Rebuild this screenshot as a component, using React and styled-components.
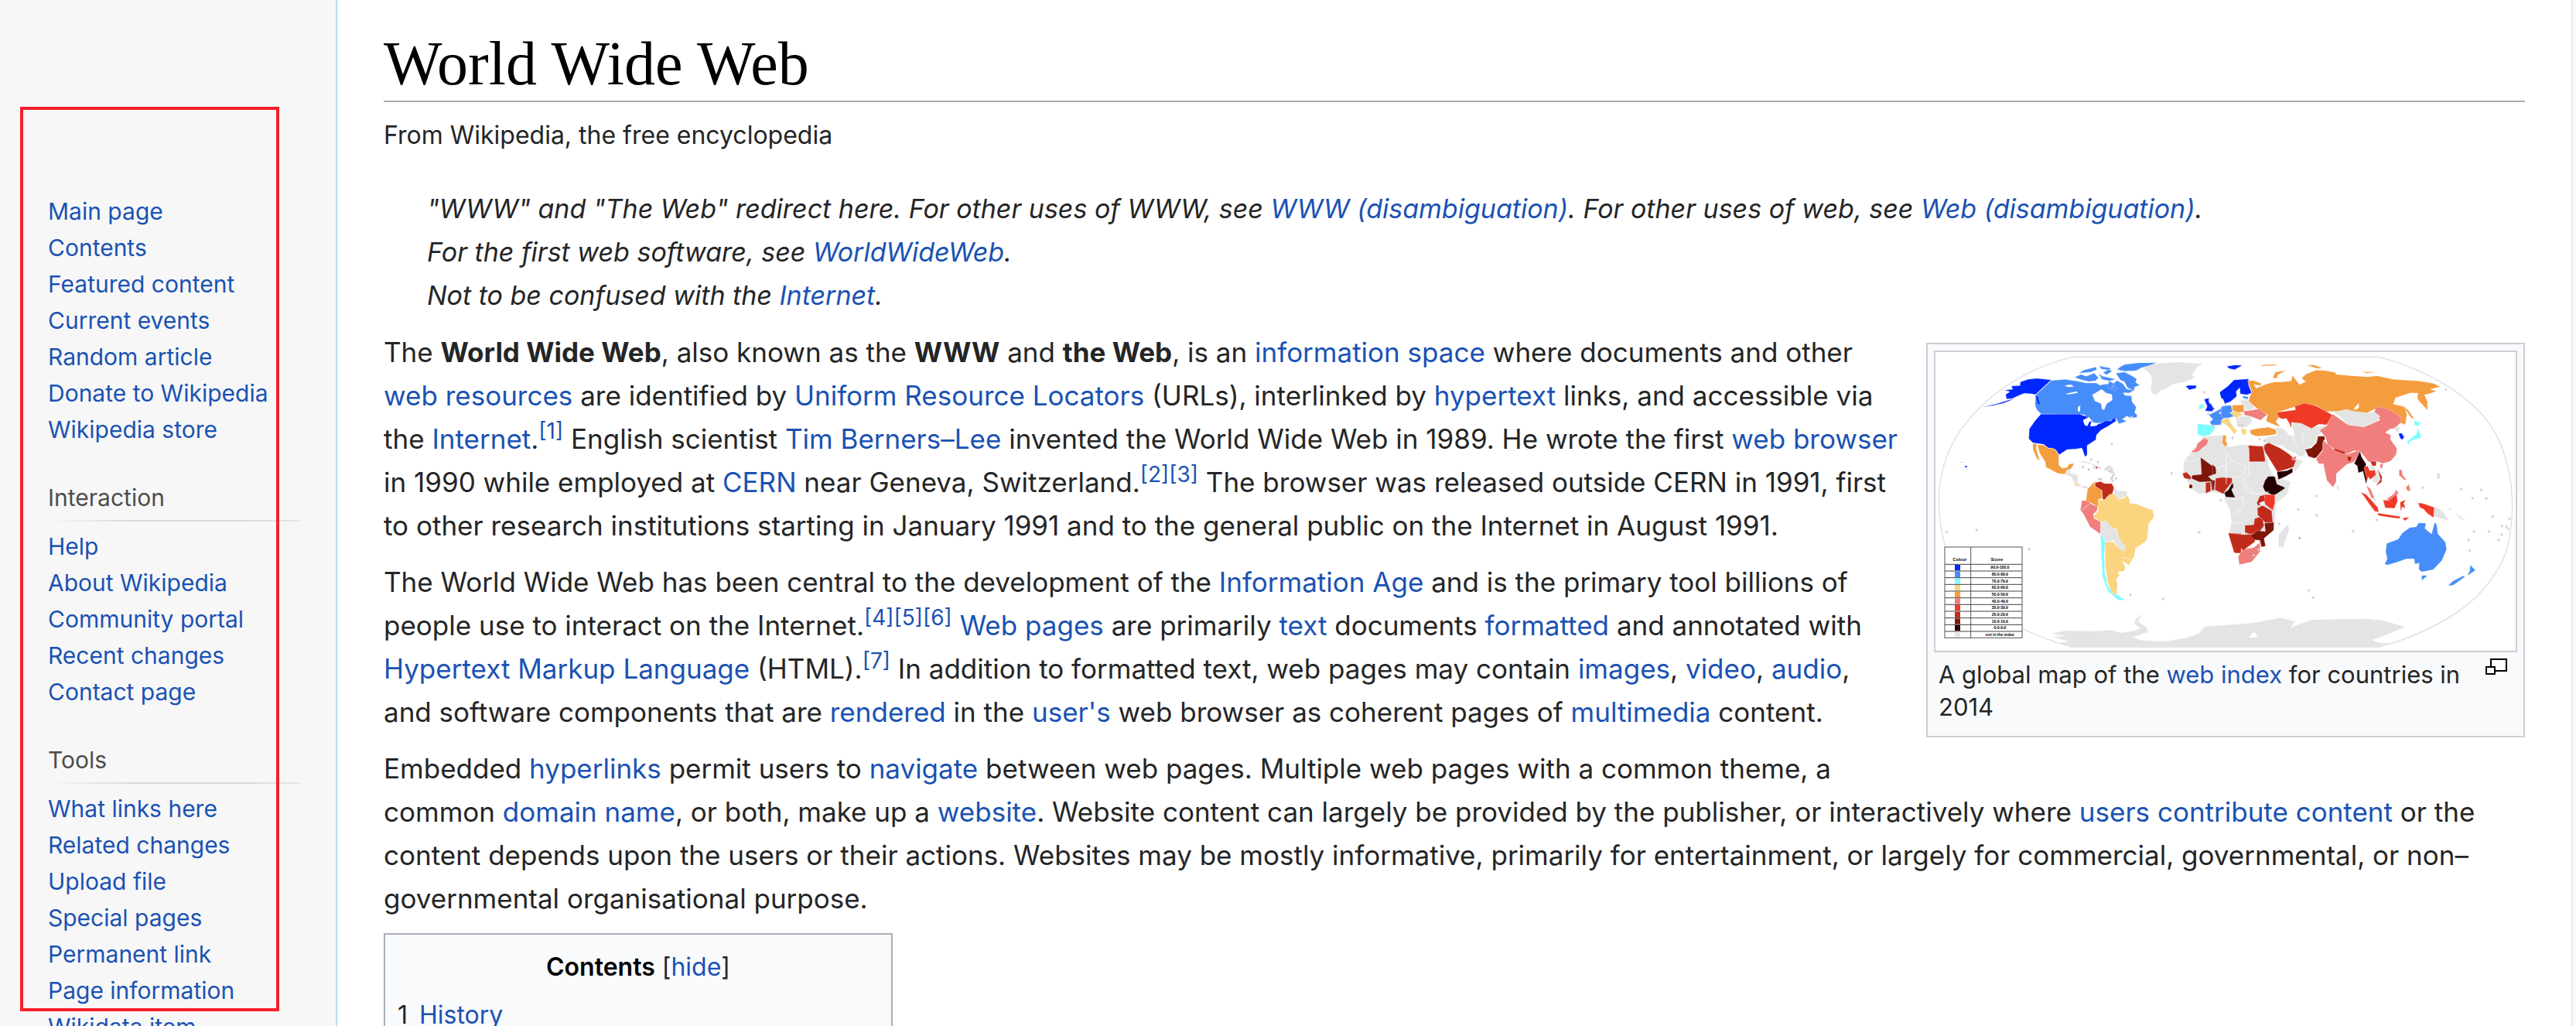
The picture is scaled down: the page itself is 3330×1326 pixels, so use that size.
import React from "react";
import styled, { createGlobalStyle } from "styled-components";

const GlobalStyle = createGlobalStyle`
  body {
    margin: 0;
    background: #fafafa;
    color: #242526;
    font-family: Inter, "Liberation Sans", sans-serif;
    font-size: 32px;
    line-height: 56px;
  }
`;

const Page = styled.div`
  position: relative;
  display: flex;
  height: 100vh;
  overflow: hidden;
`;

const Sidebar = styled.nav`
  box-sizing: border-box;
  flex: 0 0 436px;
  padding: 250px 46px 0 62px;
  border-right: 2px solid #b8dcf4;
  background: #f7f7f7;
  font-size: 30px;
  line-height: 47px;
`;

const Portal = styled.section`
  & + & {
    margin-top: 41px;
  }
`;

const PortalTitle = styled.h3`
  margin: 0 0 9px;
  padding-bottom: 5px;
  border-bottom: 2px solid;
  border-image: linear-gradient(to right, rgba(214, 214, 214, 0), #d9d9d9 33%, #d9d9d9 80%, #e6e6e6) 1;
  color: #4d4d4d;
  font-size: 30px;
  font-weight: 400;
`;

const PortalList = styled.ul`
  margin: 0;
  padding: 0;
  list-style: none;
  white-space: nowrap;
`;

const Link = styled.a`
  color: #1a52b3;
  text-decoration: none;
`;

const Highlight = styled.div`
  position: absolute;
  box-sizing: border-box;
  left: 26px;
  top: 138px;
  width: 335px;
  height: 1169px;
  border: 4px solid #f41f2a;
  pointer-events: none;
`;

const Article = styled.main`
  flex: 1;
  min-width: 0;
  margin-right: 4px;
  padding: 34px 60px 0;
  border-right: 2px solid #e8e9ea;
  background: #fff;
`;

const Title = styled.h1`
  margin: 0;
  border-bottom: 2px solid #a7adb5;
  color: #000;
  font-family: "Liberation Serif", serif;
  font-size: 80px;
  font-weight: 400;
  line-height: 96px;
`;

const Tagline = styled.div`
  margin: 15px 0 39px;
`;

const Hatnote = styled.div`
  padding-left: 56px;
  font-size: 34px;
  font-style: italic;
`;

const Paragraph = styled.p`
  margin: 17px 0;
  font-size: 35px;
`;

const Ref = styled.sup`
  font-size: 28px;
  line-height: 1;
`;

const Thumb = styled.figure`
  box-sizing: border-box;
  float: right;
  width: 774px;
  margin: 33px 0 26px 14px;
  padding: 8px;
  border: 2px solid #cbcfd4;
  background: #f9fafc;
`;

const MapFrame = styled.div`
  border: 2px solid #cbcfd4;
  background: #fff;
`;

const MapSvg = styled.svg`
  display: block;
  width: 100%;
`;

const Caption = styled.figcaption`
  display: flex;
  align-items: flex-start;
  justify-content: space-between;
  gap: 24px;
  padding: 8px 13px 8px 6px;
  font-size: 31px;
  line-height: 42px;
`;

const Enlarge = styled(Link)`
  display: flex;
`;

const Toc = styled.section`
  box-sizing: border-box;
  width: 658px;
  padding: 14px;
  border: 2px solid #a7adb5;
  background: #f9fafc;
`;

const TocHead = styled.div`
  text-align: center;
`;

const TocTitle = styled.h2`
  display: inline;
  color: #000;
  font-size: 32px;
  font-weight: 600;
`;

const Toggle = styled.button`
  padding: 0;
  border: 0;
  background: none;
  color: #1a52b3;
  font: inherit;
  cursor: pointer;
`;

const TocList = styled.ol`
  margin: 6px 0 0;
  padding: 0 0 0 2px;
  list-style: none;
`;

const TocItem = styled.li`
  display: flex;
  gap: 15px;
`;

const portals = [
  {
    items: ["Main page", "Contents", "Featured content", "Current events", "Random article", "Donate to Wikipedia", "Wikipedia store"],
  },
  {
    title: "Interaction",
    items: ["Help", "About Wikipedia", "Community portal", "Recent changes", "Contact page"],
  },
  {
    title: "Tools",
    items: ["What links here", "Related changes", "Upload file", "Special pages", "Permanent link", "Page information", "Wikidata item"],
  },
];

const A = ({ children }) => <Link href="#">{children}</Link>;
const Cite = ({ n }) => (
  <Ref>
    <A>[{n}]</A>
  </Ref>
);

const C = {
  blue: "#0026ff",
  azure: "#478dfa",
  cyan: "#7dfdff",
  sand: "#fad47e",
  orange: "#f49d3e",
  pink: "#f07e7c",
  red: "#f03a27",
  brick: "#c12b1b",
  maroon: "#80150a",
  black: "#260000",
  grey: "#e4e4e4",
};

const west = [
  ["grey", "M895 136L960 122L1040 117L1135 124L1110 136L1102 150L1090 170L1104 176L1070 192L1020 202L985 222L966 230L954 245L936 238L930 215L936 195L932 170L918 152Z"],
  ["azure", "M545 188L600 184L640 190L680 198L720 198L732 206L760 202L782 204L800 188L822 200L838 222L865 226L850 236L824 236L830 246L856 248L858 270L875 292L868 312L878 322L876 332L850 332L838 326L820 338L838 346L808 356L795 334L760 350L715 355L700 345L672 320L505 318L488 300L482 282L484 245Z"],
  ["azure", "M636 176L660 164L680 172L712 160L728 178L716 190L690 192L664 186ZM652 160L672 148L718 136L722 146L696 156ZM746 158L768 144L780 152L760 166ZM812 136L830 126L880 120L955 119L926 130L896 138L874 150L830 152L800 146ZM796 160L830 156L858 170L876 182L872 196L888 206L868 214L866 228L840 216L830 194L812 186ZM728 160L744 172L766 176L796 184L770 190L742 184ZM770 190L790 202L776 222L762 212ZM730 132L776 140L770 148L740 144ZM780 206L806 218L790 230Z"],
  ["blue", "M425 194L455 184L490 180L545 186L484 243L470 240L440 238L415 248L395 258L372 260L368 242L385 232L364 226L396 222L390 210L424 208ZM280 290L330 280L380 264L400 260L360 276L318 286ZM484 246L494 250L502 282L492 280Z"],
  ["blue", "M505 319L654 319L676 326L704 336L696 366L738 354L756 345L776 345L792 330L796 346L764 366L738 380L720 400L718 418L684 440L684 478L676 484L664 450L640 454L606 456L576 476L562 456L546 450L534 450L516 436L474 430L458 414L460 376L484 342Z"],
  ["orange", "M474 432L490 436L486 450L500 498L490 492L474 456ZM492 438L516 438L534 452L548 450L562 458L574 478L574 516L586 528L606 526L614 512L634 510L622 530L604 538L598 552L570 548L524 524L522 504L500 470Z"],
  ["grey", "M598 552L610 532L620 534L618 546L648 554L650 584L662 600L680 596L690 606L672 606L650 598L634 584L622 562ZM650 502L672 500L712 514L740 524L740 532L704 530L706 516L674 506Z"],
  ["sand", "M632 584L644 588L652 598L640 598Z"],
  ["orange", "M716 578L712 598L740 612L742 644L728 650L728 678L704 666L680 654L686 608Z"],
  ["brick", "M716 584L736 580L752 588L780 588L788 604L782 628L760 640L754 652L744 648L742 614L714 598Z"],
  ["grey", "M788 604L806 616L840 618L838 636L808 650L788 628Z"],
  ["pink", "M664 654L684 654L698 666L726 678L720 696L708 706L712 724L736 736L736 784L696 756L670 706L658 690Z"],
  ["sand", "M770 630L788 628L808 650L830 644L838 632L850 652L848 664L880 668L912 682L938 690L944 716L922 746L918 800L910 814L872 838L866 870L846 904L820 888L822 850L832 838L808 812L800 766L776 756L758 734L736 736L708 716L726 696L730 652L758 648Z"],
  ["grey", "M738 738L758 732L776 756L798 768L812 806L832 830L828 852L806 838L784 806L770 816L754 812L738 780Z"],
  ["cyan", "M736 784L744 792L754 816L750 870L752 930L762 980L784 1014L806 1022L830 1040L806 1040L766 1006L744 950L740 880Z"],
  ["sand", "M754 816L784 814L806 838L828 852L820 884L832 914L828 926L804 930L810 944L796 960L802 978L798 1020L780 1010L764 970L754 900Z"],
  ["blue", "M1066 210L1080 207L1108 208L1106 218L1080 224ZM1226 134L1258 128L1258 144L1238 142ZM1138 262L1156 256L1156 272L1168 284L1174 300L1168 308L1142 306L1150 288ZM192 504L206 508L194 506ZM208 518L220 520L216 528Z"],
  ["cyan", "M1118 284L1134 278L1138 292L1118 302ZM1112 356L1170 362L1182 372L1160 400L1134 404L1112 398Z"],
  ["azure", "M1156 322L1180 310L1202 298L1212 286L1236 284L1246 300L1238 332L1210 336L1202 360L1168 362L1160 350L1172 338ZM1200 292L1220 286L1218 300Z"],
  ["sand", "M1204 342L1234 334L1240 350L1260 388L1248 380L1226 356L1206 352Z"],
  ["grey", "M1132 406L1214 400L1230 446L1280 438L1324 438L1376 442L1388 520L1410 560L1474 580L1460 630L1418 660L1412 740L1400 780L1340 790L1234 780L1244 740L1238 690L1216 650L1220 630L1180 622L1118 628L1084 604L1070 574L1056 554L1060 500L1090 466L1128 420Z"],
  ["pink", "M1138 412L1154 418L1150 434L1112 466L1086 466L1106 450L1112 432Z"],
  ["orange", "M1212 400L1224 402L1222 424L1228 434L1220 446L1208 428Z"],
  ["maroon", "M1124 486L1184 530L1184 550L1154 560L1172 578L1178 612L1168 614L1164 580L1120 582L1088 568L1092 556L1128 552ZM1080 592L1092 592L1092 606L1080 606Z"],
  ["brick", "M1054 548L1070 544L1086 560L1086 572L1060 566ZM1144 584L1162 582L1164 616L1144 626ZM1182 568L1204 564L1246 566L1246 582L1222 612L1212 628L1180 612ZM1232 780L1282 782L1282 856L1260 858L1244 822Z"],
  ["black", "M1248 584L1252 600L1244 612L1258 642L1222 640L1216 624L1232 612Z"],
  ["brick", "M686 530L694 532L690 537ZM716 522L726 524L720 532Z"],
  ["grey", "M545 1170L600 1158L700 1160L780 1156L812 1166L862 1160L890 1150L866 1128L876 1110L905 1092L884 1114L884 1126L916 1146L918 1164L860 1184L900 1196L980 1200L1060 1188L1116 1170L1140 1142L1250 1134L1330 1128L1380 1118L1434 1108L1490 1122L1474 1146L1552 1116L1650 1114L1770 1112L1830 1118L1918 1144L1850 1172L1790 1194L1816 1206L1870 1206L1816 1222L624 1222L574 1206L612 1200L548 1182L600 1180Z"],
];

const east = [
  ["blue", "M56 134L90 128L116 130L86 146L66 142ZM28 234L60 210L84 186L140 182L140 206L152 236L134 244L108 240L106 216L92 230L94 250L70 270L48 278L42 262L34 256ZM0 290L8 296L0 306ZM722 394L734 392L744 408L736 418L728 412ZM902 222L912 224L904 226Z"],
  ["azure", "M118 248L140 252L136 262L118 256ZM36 290L72 284L78 310L86 326L60 334L34 328Z"],
  ["orange", "M136 190L160 188L190 200L186 208L160 204L170 218L210 202L240 194L266 194L306 190L310 168L338 204L362 192L346 180L362 164L402 148L440 150L480 158L478 164L540 170L600 174L640 170L700 184L800 190L860 200L884 212L846 222L868 230L840 240L822 244L834 270L834 304L800 266L794 256L798 238L770 236L744 244L710 256L702 280L746 290L754 320L748 360L726 352L720 330L692 316L628 300L600 314L548 310L470 308L440 308L400 284L346 280L320 290L252 312L258 330L246 348L264 368L240 360L208 346L214 320L170 294L140 270L146 246L154 234Z"],
  ["orange", "M234 178L244 156L288 149L254 166L250 180ZM366 128L396 128L426 140L406 142ZM740 288L760 304L784 338L770 332ZM184 128L240 126L252 130L196 132ZM578 154L632 156L600 160ZM76 284L122 282L122 310L96 314L78 304ZM146 380L176 374L214 368L246 378L248 396L216 402L170 404L148 396Z"],
  ["grey", "M110 262L140 266L164 292L152 302L122 300L122 282L110 276ZM90 336L112 326L150 328L154 352L120 374L96 364Z"],
  ["pink", "M122 306L152 304L180 298L212 320L196 334L186 342L150 328L124 322Z"],
  ["sand", "M66 312L92 308L118 320L92 334ZM34 342L62 334L68 352L96 384L84 396L64 368L38 352ZM110 374L132 378L128 400L116 398Z"],
  ["grey", "M246 370L276 376L300 400L318 404L310 372L306 348L346 354L382 372L440 362L430 382L410 402L402 430L362 456L358 480L340 484L324 472L290 456L270 440L240 436L200 430L208 408L250 402Z"],
  ["red", "M250 312L322 302L320 288L356 276L400 286L466 322L444 360L412 358L384 374L344 354L306 350L306 370L284 362L278 340L258 332Z"],
  ["pink", "M466 318L526 360L588 368L650 342L640 326L626 322L634 290L680 298L732 330L730 352L706 374L690 376L670 390L692 400L690 416L716 452L712 476L690 502L660 510L634 500L606 504L576 466L550 460L524 472L490 466L448 438L436 404L416 382L444 364Z"],
  ["grey", "M470 312L520 300L550 308L604 314L628 310L650 326L640 346L588 368L526 360L496 330Z"],
  ["maroon", "M410 404L434 404L436 416L428 430L428 456L404 486L394 490L372 482L360 456L384 450L404 430Z"],
  ["pink", "M430 420L470 456L524 474L570 458L564 480L548 504L520 514L480 550L480 580L468 602L444 576L430 510L414 512L402 492L428 460Z"],
  ["brick", "M470 450L516 466L512 474L474 460ZM522 482L542 484L534 504L524 498ZM140 440L196 444L204 490L204 504L142 504ZM196 440L218 430L262 450L298 474L326 500L324 520L290 532L252 542L232 510L204 464Z"],
  ["black", "M250 542L290 538L310 528L312 544L284 560L256 572ZM204 576L216 560L242 560L250 590L284 604L264 630L232 632L204 618L196 600ZM572 462L578 484L596 512L590 536L600 570L596 590L584 540L566 546L562 520L550 510L562 484Z"],
  ["grey", "M326 492L352 502L322 540L312 530ZM222 540L256 574L304 580L282 638L244 662L242 632L282 606L240 560ZM482 592L492 600L490 616L482 610ZM256 786L292 746L298 762L274 836L256 834ZM718 484L722 490L718 502ZM860 680L880 684L902 706L916 732L890 724L860 716ZM606 514L620 516L640 540L652 572L640 588L620 580L626 550ZM706 370L726 364L722 392L710 384Z"],
  ["pink", "M306 490L326 480L322 498L310 498ZM100 870L120 842L160 836L184 816L186 850L152 892L104 902ZM650 512L662 512L658 530L650 524ZM596 594L614 610L630 648L616 642ZM724 534L734 534L738 556L754 574L742 572L724 556ZM750 604L762 590L768 614L758 618ZM676 648L704 628L712 612L722 624L700 650L680 654Z"],
  ["brick", "M612 502L636 502L634 520L620 518ZM640 530L658 562L656 582L634 598L652 572ZM172 664L184 636L202 632L206 660L194 656L180 676ZM174 684L194 672L230 694L234 738L206 740L176 710ZM164 724L182 718L196 730L200 752L178 780L146 784L126 778L126 750L160 748ZM62 780L118 786L156 784L166 812L118 848L112 838L110 858L84 856Z"],
  ["red", "M202 630L242 632L242 664L234 692L204 668ZM588 524L602 520L610 538L630 536L634 554L612 572L604 562L600 580ZM576 620L596 630L620 656L642 682L644 698L630 696L606 664ZM640 702L680 708L730 716L724 724L680 718L644 712ZM662 652L684 654L714 630L718 656L706 684L670 682ZM728 660L750 650L742 664L748 684L736 678L730 696ZM798 662L820 666L860 680L858 720L836 706L820 688L804 680ZM736 722L764 718L748 732Z"],
  ["maroon", "M202 742L238 738L238 768L200 800L206 830L190 834L184 808L160 806L148 790L176 770L206 774ZM0 514L12 524L14 550L0 552ZM0 574L10 576L6 612L0 614Z"],
  ["cyan", "M784 344L808 352L796 366L782 360ZM796 372L808 400L808 412L784 416L764 426L760 440L754 426L772 410L792 396ZM196 430L202 440L198 454ZM626 646L636 648L632 656Z"],
  ["azure", "M668 900L678 880L672 850L676 820L720 804L736 780L766 758L790 756L800 740L828 742L824 762L850 784L862 738L870 748L874 782L904 816L908 844L890 886L856 922L812 930L800 920L802 896L786 900L782 880L752 880L712 894L678 904ZM812 944L834 944L812 964ZM1000 904L1020 924L988 946L998 926ZM976 944L978 950L934 982L914 984L932 966Z"],
  ["brick", "M334 796L342 798L338 805Z"],
  ["grey", "M920 680L930 690L918 692ZM940 700L984 732L960 724Z"],
];

const lakes = [
  "M704 244L724 232L740 222L758 236L780 242L782 264L760 278L750 302L742 300L738 278L714 268Z",
  "M596 208L620 204L634 212L610 214Z",
  "M600 240L644 230L648 236L612 242Z",
  "M648 292L658 284L656 308L648 308Z",
  "M668 342L690 330L704 342L692 350L684 366L674 360Z",
  "M700 350L730 354L720 364L702 366Z",
  "M1438 340L1456 334L1470 356L1482 398L1470 402L1450 380L1430 362Z",
  "M1350 664L1370 656L1366 676Z",
  "M1718 298L1738 276L1738 294L1726 302Z",
  "M1332 1162L1346 1186L1310 1184Z",
  "M1322 356L1362 348L1398 366L1372 372L1340 368Z",
];

const borders =
  "M484 244L545 188M1062 500L1090 500L1128 486M1090 466L1092 480M1184 530L1250 500L1210 450M1222 470L1224 590M1250 500L1300 520L1290 560L1248 566M1312 450L1312 504L1374 504M1312 504L1310 560L1290 570L1300 620L1340 628L1390 620M1300 590L1330 625M1244 650L1290 640L1290 680L1250 710M1290 740L1240 742M822 874L850 882M664 690L690 670M1480 404L1500 440M1520 388L1524 440";

const islands = [
  [780, 433], [700, 495], [726, 505], [668, 524], [756, 532], [764, 526], [772, 524], [780, 532], [768, 538],
  [776, 542], [784, 544], [788, 554], [782, 562], [778, 570], [784, 578], [796, 568], [730, 570], [738, 572],
  [1012, 548], [1138, 234], [140, 775], [256, 768], [460, 842], [852, 1019], [978, 1035], [1119, 777], [1202, 653],
  [1248, 411], [1353, 416], [1372, 422], [1272, 362], [1284, 362], [1574, 636], [1503, 688], [1574, 711],
  [1429, 743], [1715, 773], [1808, 729], [1544, 1002], [1560, 1030], [1985, 604], [2047, 554], [2046, 564],
  [2135, 609], [2213, 612], [2179, 645], [2232, 646], [2257, 716], [2322, 725], [2292, 753], [2310, 755],
  [2317, 763], [2184, 774], [2242, 774], [2292, 786], [2280, 807], [2163, 807], [2168, 848], [1330, 866],
  [1350, 845], [1174, 364], [1154, 318], [1200, 314], [856, 331], [1236, 356],
];

const legend = [
  ["blue", "90.0-100.0"],
  ["azure", "80.0-89.9"],
  ["cyan", "70.0-79.9"],
  ["sand", "60.0-69.9"],
  ["orange", "50.0-59.9"],
  ["pink", "40.0-49.9"],
  ["red", "30.0-39.9"],
  ["brick", "20.0-29.9"],
  ["maroon", "10.0-19.9"],
  ["black", "0.0-9.9"],
  ["grey", "not in the index"],
];

const WorldMap = () => (
  <MapSvg viewBox="96 78 2250 1158" role="img" aria-label="World map of the web index">
    <path
      d="M626 97H1818C2010 150 2180 250 2260 380C2340 520 2350 700 2310 850C2240 1040 2060 1150 1818 1222H624C380 1150 200 1040 136 840C90 680 100 520 190 385C280 260 420 150 626 97Z"
      fill="none"
      stroke="#dedede"
      strokeWidth="4"
    />
    <g stroke="#fff" strokeOpacity="0.35" strokeWidth="2" strokeLinejoin="round">
      {west.map(([c, d], i) => (
        <path key={i} d={d} fill={C[c]} />
      ))}
      <g transform="translate(1170 0)">
        {east.map(([c, d], i) => (
          <path key={i} d={d} fill={C[c]} />
        ))}
      </g>
    </g>
    {lakes.map((d) => (
      <path key={d} d={d} fill="#fff" />
    ))}
    <path d={borders} fill="none" stroke="#fff" strokeOpacity="0.7" strokeWidth="3" />
    {islands.map(([x, y]) => (
      <circle key={`${x}-${y}`} cx={x} cy={y} r="4" fill="#dcdcdc" stroke="#c8c8c8" strokeWidth="2" />
    ))}
    <rect x="132" y="834" width="300" height="352" fill="#fff" stroke="#555" strokeWidth="3" />
    <g fontFamily="Liberation Sans, sans-serif" fontWeight="700" fontSize="17" textAnchor="middle">
      <text x="190" y="887">Colour</text>
      <text x="334" y="887">Score</text>
      {legend.map(([c, label], i) => (
        <g key={c}>
          <path d={`M132 ${901 + i * 26}H432`} stroke="#444" strokeWidth="3" />
          <rect x="171" y={903 + i * 26} width="21" height="22" fill={C[c]} />
          <text x="346" y={919 + i * 26} fontSize="15">{label}</text>
        </g>
      ))}
    </g>
    <path d="M233 834V1186" stroke="#555" strokeWidth="3" />
  </MapSvg>
);

const EnlargeIcon = () => (
  <svg width="28" height="22" viewBox="0 0 28 22" aria-hidden="true">
    <rect x="7" y="1" width="20" height="15" fill="#fff" stroke="#000" strokeWidth="2" />
    <rect x="1" y="11" width="11" height="9" fill="#fff" stroke="#000" strokeWidth="2" />
  </svg>
);

export default function App() {
  return (
    <>
      <GlobalStyle />
      <Page>
        <Sidebar>
          {portals.map((portal) => (
            <Portal key={portal.items[0]}>
              {portal.title && <PortalTitle>{portal.title}</PortalTitle>}
              <PortalList>
                {portal.items.map((item) => (
                  <li key={item}>
                    <A>{item}</A>
                  </li>
                ))}
              </PortalList>
            </Portal>
          ))}
        </Sidebar>
        <Article>
          <Title>World Wide Web</Title>
          <Tagline>From Wikipedia, the free encyclopedia</Tagline>
          <Hatnote>
            "WWW" and "The Web" redirect here. For other uses of WWW, see <A>WWW (disambiguation)</A>. For other uses of web, see{" "}
            <A>Web (disambiguation)</A>.
          </Hatnote>
          <Hatnote>
            For the first web software, see <A>WorldWideWeb</A>.
          </Hatnote>
          <Hatnote>
            Not to be confused with the <A>Internet</A>.
          </Hatnote>
          <Thumb>
            <MapFrame>
              <WorldMap />
            </MapFrame>
            <Caption>
              <span>
                A global map of the <A>web index</A> for countries in 2014
              </span>
              <Enlarge href="#" aria-label="Enlarge">
                <EnlargeIcon />
              </Enlarge>
            </Caption>
          </Thumb>
          <Paragraph>
            The <b>World Wide Web</b>, also known as the <b>WWW</b> and <b>the Web</b>, is an <A>information space</A> where documents and
            other
            <br />
            <A>web resources</A> are identified by <A>Uniform Resource Locators</A> (URLs), interlinked by <A>hypertext</A> links, and
            accessible via
            <br />
            the <A>Internet</A>.<Cite n="1" /> English scientist <A>Tim Berners–Lee</A> invented the World Wide Web in 1989. He wrote the
            first <A>web browser</A>
            <br />
            in 1990 while employed at <A>CERN</A> near Geneva, Switzerland.
            <Cite n="2" />
            <Cite n="3" /> The browser was released outside CERN in 1991, first
            <br />
            to other research institutions starting in January 1991 and to the general public on the Internet in August 1991.
          </Paragraph>
          <Paragraph>
            The World Wide Web has been central to the development of the <A>Information Age</A> and is the primary tool billions of
            <br />
            people use to interact on the Internet.
            <Cite n="4" />
            <Cite n="5" />
            <Cite n="6" /> <A>Web pages</A> are primarily <A>text</A> documents <A>formatted</A> and annotated with
            <br />
            <A>Hypertext Markup Language</A> (HTML).
            <Cite n="7" /> In addition to formatted text, web pages may contain <A>images</A>, <A>video</A>, <A>audio</A>,
            <br />
            and software components that are <A>rendered</A> in the <A>user's</A> web browser as coherent pages of <A>multimedia</A>{" "}
            content.
          </Paragraph>
          <Paragraph>
            Embedded <A>hyperlinks</A> permit users to <A>navigate</A> between web pages. Multiple web pages with a common theme, a
            <br />
            common <A>domain name</A>, or both, make up a <A>website</A>. Website content can largely be provided by the publisher, or
            interactively where <A>users contribute content</A> or the
            <br />
            content depends upon the users or their actions. Websites may be mostly informative, primarily for entertainment, or largely
            for commercial, governmental, or non–
            <br />
            governmental organisational purpose.
          </Paragraph>
          <Toc>
            <TocHead>
              <TocTitle>Contents</TocTitle> [<Toggle type="button">hide</Toggle>]
            </TocHead>
            <TocList>
              <TocItem>
                <span>1</span>
                <A>History</A>
              </TocItem>
            </TocList>
          </Toc>
        </Article>
        <Highlight />
      </Page>
    </>
  );
}
